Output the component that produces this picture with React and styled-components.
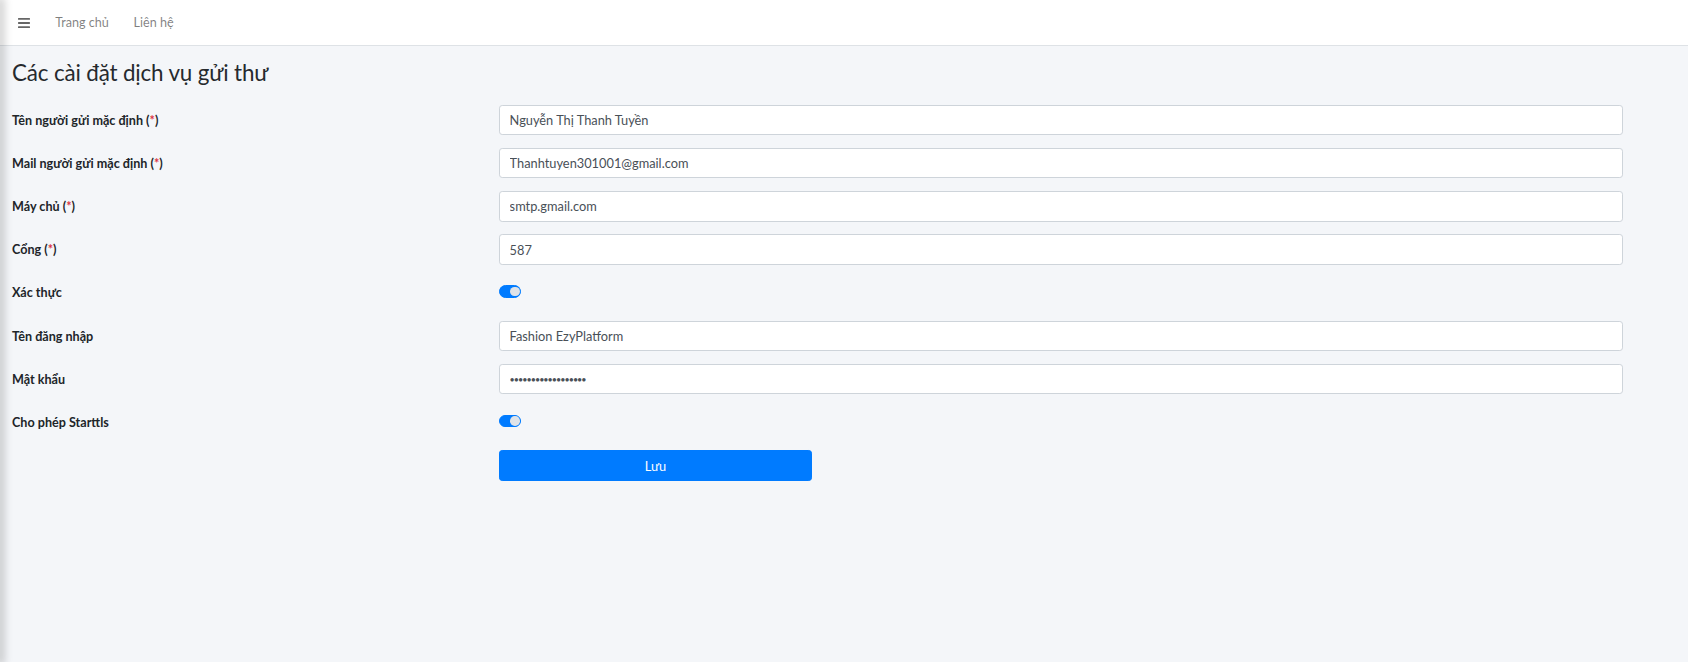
import React from "react";
import styled, { createGlobalStyle } from "styled-components";

const GlobalStyle = createGlobalStyle`
  html, body { margin: 0; padding: 0; }
  body {
    background: #f4f6f9;
    font-family: "Lato", "Noto Sans", sans-serif;
    color: #212529;
    font-size: 12.8px;
  }
  * { box-sizing: border-box; }
`;

const Shell = styled.div`
  display: flex;
  min-height: 100vh;
`;

const SidebarEdge = styled.aside`
  position: relative;
  z-index: 5;
  width: 0;
  flex: none;
  box-shadow: 0 0 10px 3px rgba(0, 0, 0, 0.28);
`;

const Main = styled.div`
  flex: 1;
  display: flex;
  flex-direction: column;
`;

const Navbar = styled.nav`
  height: 46px;
  background: #fff;
  border-bottom: 1px solid #dee2e6;
  display: flex;
  align-items: center;
  padding: 0 6px;
`;

const NavLink = styled.a`
  display: flex;
  align-items: center;
  padding: 8px 12.4px;
  color: rgba(0, 0, 0, 0.5);
  font-size: 12.6px;
  text-decoration: none;
  cursor: pointer;
`;

const Content = styled.main`
  padding: 0 12px;
`;

const Title = styled.h1`
  margin: 14px 0 18px;
  font-size: 22.4px;
  font-weight: 400;
  line-height: 1.2;
  color: #262a2e;
  letter-spacing: -0.15px;
`;

const Form = styled.form`
  display: grid;
  grid-template-columns: 487px 1124px;
  grid-auto-rows: 30.4px;
  row-gap: 12.8px;
  align-items: center;
`;

const Label = styled.label`
  font-weight: 700;
  font-size: 12.6px;
  color: #212529;
`;

const Req = styled.span`
  color: #dc3545;
`;

const Input = styled.input`
  width: 100%;
  height: 100%;
  border: 1px solid #ced4da;
  border-radius: 3.2px;
  background: #fff;
  padding: 0 9.6px;
  font-family: inherit;
  font-size: ${(p) => (p.type === "password" ? "9px" : "12.8px")};
  letter-spacing: ${(p) => (p.type === "password" ? "-1px" : "normal")};
  color: #495057;
  outline: none;
`;

const SwitchTrack = styled.span`
  position: relative;
  display: inline-block;
  width: 22.4px;
  height: 12.8px;
  border-radius: 7px;
  background: ${(p) => (p.$on ? "#007bff" : "#fff")};
  border: 1px solid ${(p) => (p.$on ? "#007bff" : "#adb5bd")};
  &::after {
    content: "";
    position: absolute;
    top: 0.6px;
    left: ${(p) => (p.$on ? "10.4px" : "1px")};
    width: 9.6px;
    height: 9.6px;
    border-radius: 50%;
    background: #dfe3e8;
  }
`;

const SaveButton = styled.button`
  width: 313px;
  height: 100%;
  background: #007bff;
  border: 1px solid #007bff;
  border-radius: 3.2px;
  color: #fff;
  font-family: inherit;
  font-size: 12.8px;
  cursor: pointer;
`;

const MenuIcon = () => (
  <svg width="12" height="10" viewBox="0 0 12 10" aria-hidden="true">
    <rect x="0" y="0" width="12" height="1.8" rx="0.6" fill="#666" />
    <rect x="0" y="4.1" width="12" height="1.8" rx="0.6" fill="#666" />
    <rect x="0" y="8.2" width="12" height="1.8" rx="0.6" fill="#666" />
  </svg>
);

const fields = [
  { label: "Tên người gửi mặc định", req: true, value: "Nguyễn Thị Thanh Tuyền" },
  { label: "Mail người gửi mặc định", req: true, value: "Thanhtuyen301001@gmail.com" },
  { label: "Máy chủ", req: true, value: "smtp.gmail.com" },
  { label: "Cổng", req: true, value: "587" },
  { label: "Xác thực", toggle: true },
  { label: "Tên đăng nhập", value: "Fashion EzyPlatform" },
  { label: "Mật khẩu", value: "Thanhtuyen30100100", type: "password" },
  { label: "Cho phép Starttls", toggle: true },
];

export default function App() {
  return (
    <>
      <GlobalStyle />
      <Shell>
        <SidebarEdge />
        <Main>
          <Navbar>
            <NavLink>
              <MenuIcon />
            </NavLink>
            <NavLink>Trang chủ</NavLink>
            <NavLink>Liên hệ</NavLink>
          </Navbar>
          <Content>
            <Title>Các cài đặt dịch vụ gửi thư</Title>
            <Form onSubmit={(e) => e.preventDefault()}>
              {fields.map((f) => (
                <React.Fragment key={f.label}>
                  <Label>
                    {f.label}
                    {f.req && (
                      <>
                        {" ("}
                        <Req>*</Req>
                        {")"}
                      </>
                    )}
                  </Label>
                  {f.toggle ? (
                    <div>
                      <SwitchTrack $on />
                    </div>
                  ) : (
                    <Input type={f.type || "text"} defaultValue={f.value} />
                  )}
                </React.Fragment>
              ))}
              <span />
              <SaveButton type="submit">Lưu</SaveButton>
            </Form>
          </Content>
        </Main>
      </Shell>
    </>
  );
}
